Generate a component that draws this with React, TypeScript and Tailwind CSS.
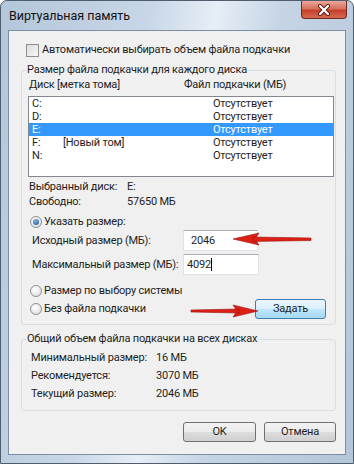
import React from 'react';

const drives = [
  { letter: 'C:', label: '', size: 'Отсутствует' },
  { letter: 'D:', label: '', size: 'Отсутствует' },
  { letter: 'E:', label: '', size: 'Отсутствует', selected: true },
  { letter: 'F:', label: '[Новый том]', size: 'Отсутствует' },
  { letter: 'N:', label: '', size: 'Отсутствует' },
];

const Radio = ({ checked }: { checked?: boolean }) => (
  <span className="w-[12px] h-[12px] rounded-full border border-[#8e8f8f] bg-[radial-gradient(circle_at_40%_35%,#ffffff,#d9d9d9)] flex items-center justify-center shrink-0">
    {checked && <span className="w-[6px] h-[6px] rounded-full bg-[radial-gradient(circle_at_40%_35%,#7fb4e6,#1c4f86)]" />}
  </span>
);

const Button = ({ children, focused, width }: { children: React.ReactNode; focused?: boolean; width: string }) => (
  <div className={`${width} h-[20px] shrink-0 rounded-[3px] border flex items-center justify-center ${focused ? 'border-[#3c7fb1] bg-[linear-gradient(#eaf6fd_0%,#d9f0fc_50%,#bee6fd_51%,#a7d9f5_100%)]' : 'border-[#707070] bg-[linear-gradient(#f2f2f2_0%,#ebebeb_50%,#dddddd_51%,#cfcfcf_100%)]'}`}>
    {children}
  </div>
);

export default function App() {
  return (
    <div className="relative w-[354px] h-[464px] overflow-hidden rounded-t-[7px] border border-[#4f5e6e] bg-[linear-gradient(100deg,#b4c6da_0%,#c8d7e7_35%,#e6eef6_50%,#c6d5e5_65%,#b3c5d9_100%)] flex flex-col font-['Roboto',sans-serif] text-[11px] tracking-[-0.2px] leading-[14px] text-[#1e1e1e] whitespace-nowrap">
      {/* Title bar */}
      <div className="h-[29px] flex items-start justify-between pl-[8px] pr-[6px] shrink-0">
        <span className="mt-[8px] text-[12.5px] tracking-normal text-[#111]">Виртуальная память</span>
        <div className="w-[46px] h-[18px] rounded-b-[4px] border border-t-0 border-[#6e2a20] bg-[linear-gradient(#e9a99b_0%,#d8705e_45%,#c4402c_55%,#d66a52_100%)] flex items-center justify-center">
          <svg width="14" height="12" viewBox="0 0 14 12">
            <path d="M3 2 L11 10 M11 2 L3 10" stroke="#5a1a12" strokeWidth="4" strokeLinecap="round" />
            <path d="M3 2 L11 10 M11 2 L3 10" stroke="#ffffff" strokeWidth="2.2" strokeLinecap="round" />
          </svg>
        </div>
      </div>

      {/* Client area */}
      <div className="mx-[7px] mb-[8px] flex-1 border border-[#7b8ea3] bg-[#f0f0f0] flex flex-col">
        <div className="mt-[12px] h-[14px] pl-[17px] flex items-center gap-[3px]">
          <span className="w-[13px] h-[13px] border border-[#8e8f8f] bg-[linear-gradient(135deg,#dcdcdc,#f6f6f6)] shrink-0" />
          <span>Автоматически выбирать объем файла подкачки</span>
        </div>

        {/* Per-disk group */}
        <fieldset className="mt-[6px] ml-[12px] mr-[9px] border border-[#d5dfe5] rounded-[3px] pb-[5px]">
          <legend className="ml-[4px] px-[1px]">Размер файла подкачки для каждого диска</legend>
          <div className="mt-[1px] h-[14px] pl-[7px] flex items-center">
            <span className="w-[155px] shrink-0">Диск [метка тома]</span>
            <span>Файл подкачки (МБ)</span>
          </div>
          <div className="mt-[4px] ml-[6px] mr-[1px] h-[81px] border border-[#828790] bg-white">
            {drives.map(d => (
              <div key={d.letter} className={`h-[13px] pl-[3px] flex items-center ${d.selected ? 'bg-[#3399ff] text-white' : ''}`}>
                <span className="w-[31px] shrink-0">{d.letter}</span>
                <span className="w-[150px] shrink-0">{d.label}</span>
                <span>{d.size}</span>
              </div>
            ))}
          </div>
          <div className="mt-[3px] h-[14px] pl-[7px] flex items-center">
            <span className="w-[98px] shrink-0">Выбранный диск:</span>
            <span>E:</span>
          </div>
          <div className="mt-[1px] h-[14px] pl-[7px] flex items-center">
            <span className="w-[98px] shrink-0">Свободно:</span>
            <span>57650 МБ</span>
          </div>
          <div className="mt-[6px] h-[14px] pl-[8px] flex items-center gap-[2px]">
            <Radio checked />
            <span>Указать размер:</span>
          </div>
          <div className="mt-[1px] h-[21px] pl-[10px] flex items-center">
            <span className="w-[151px] shrink-0">Исходный размер (МБ):</span>
            <div className="w-[75px] h-[21px] shrink-0 border border-[#e2e3ea] border-t-[#abadb3] bg-white flex items-center pl-[7px]">2046</div>
          </div>
          <div className="mt-[3px] h-[21px] pl-[10px] flex items-center">
            <span className="w-[151px] shrink-0">Максимальный размер (МБ):</span>
            <div className="w-[76px] h-[21px] shrink-0 border border-[#e2e3ea] border-t-[#abadb3] bg-white flex items-center pl-[3px]">
              4092<span className="w-[1px] h-[13px] bg-black" />
            </div>
          </div>
          <div className="mt-[9px] h-[14px] pl-[8px] flex items-center gap-[2px]">
            <Radio />
            <span>Размер по выбору системы</span>
          </div>
          <div className="mt-[1px] h-[20px] pl-[8px] pr-[9px] flex items-center justify-between">
            <div className="flex items-center gap-[2px]">
              <Radio />
              <span>Без файла подкачки</span>
            </div>
            <Button focused width="w-[71px]">Задать</Button>
          </div>
        </fieldset>

        {/* Totals group */}
        <fieldset className="mt-[7px] ml-[12px] mr-[9px] border border-[#d5dfe5] rounded-[3px] pb-[9px]">
          <legend className="ml-[4px] px-[1px]">Общий объем файла подкачки на всех дисках</legend>
          <div className="mt-[5px] flex flex-col gap-[4px] pl-[9px]">
            {[
              ['Минимальный размер:', '16 МБ'],
              ['Рекомендуется:', '3070 МБ'],
              ['Текущий размер:', '2046 МБ'],
            ].map(([k, v]) => (
              <div key={k} className="h-[14px] flex items-center">
                <span className="w-[125px] shrink-0">{k}</span>
                <span>{v}</span>
              </div>
            ))}
          </div>
        </fieldset>

        <div className="mt-[11px] pr-[9px] flex justify-end gap-[8px]">
          <Button width="w-[73px]">OK</Button>
          <Button width="w-[72px]">Отмена</Button>
        </div>
      </div>

      {/* Red arrows drawn over the dialog */}
      <svg className="absolute left-0 top-0 pointer-events-none" width="354" height="464" viewBox="0 0 354 464">
        <polygon points="232,238 258,232 254,238 258,244" fill="#dd2016" stroke="#9e0f0a" strokeWidth="0.6" />
        <polygon points="252,236 310,237 310,239.5 252,240.5" fill="#dd2016" stroke="#9e0f0a" strokeWidth="0.6" />
        <polygon points="257,310 232,304 236,310 232,316" fill="#dd2016" stroke="#9e0f0a" strokeWidth="0.6" />
        <polygon points="190,309 238,308 238,312 190,311" fill="#dd2016" stroke="#9e0f0a" strokeWidth="0.6" />
      </svg>
    </div>
  );
}
